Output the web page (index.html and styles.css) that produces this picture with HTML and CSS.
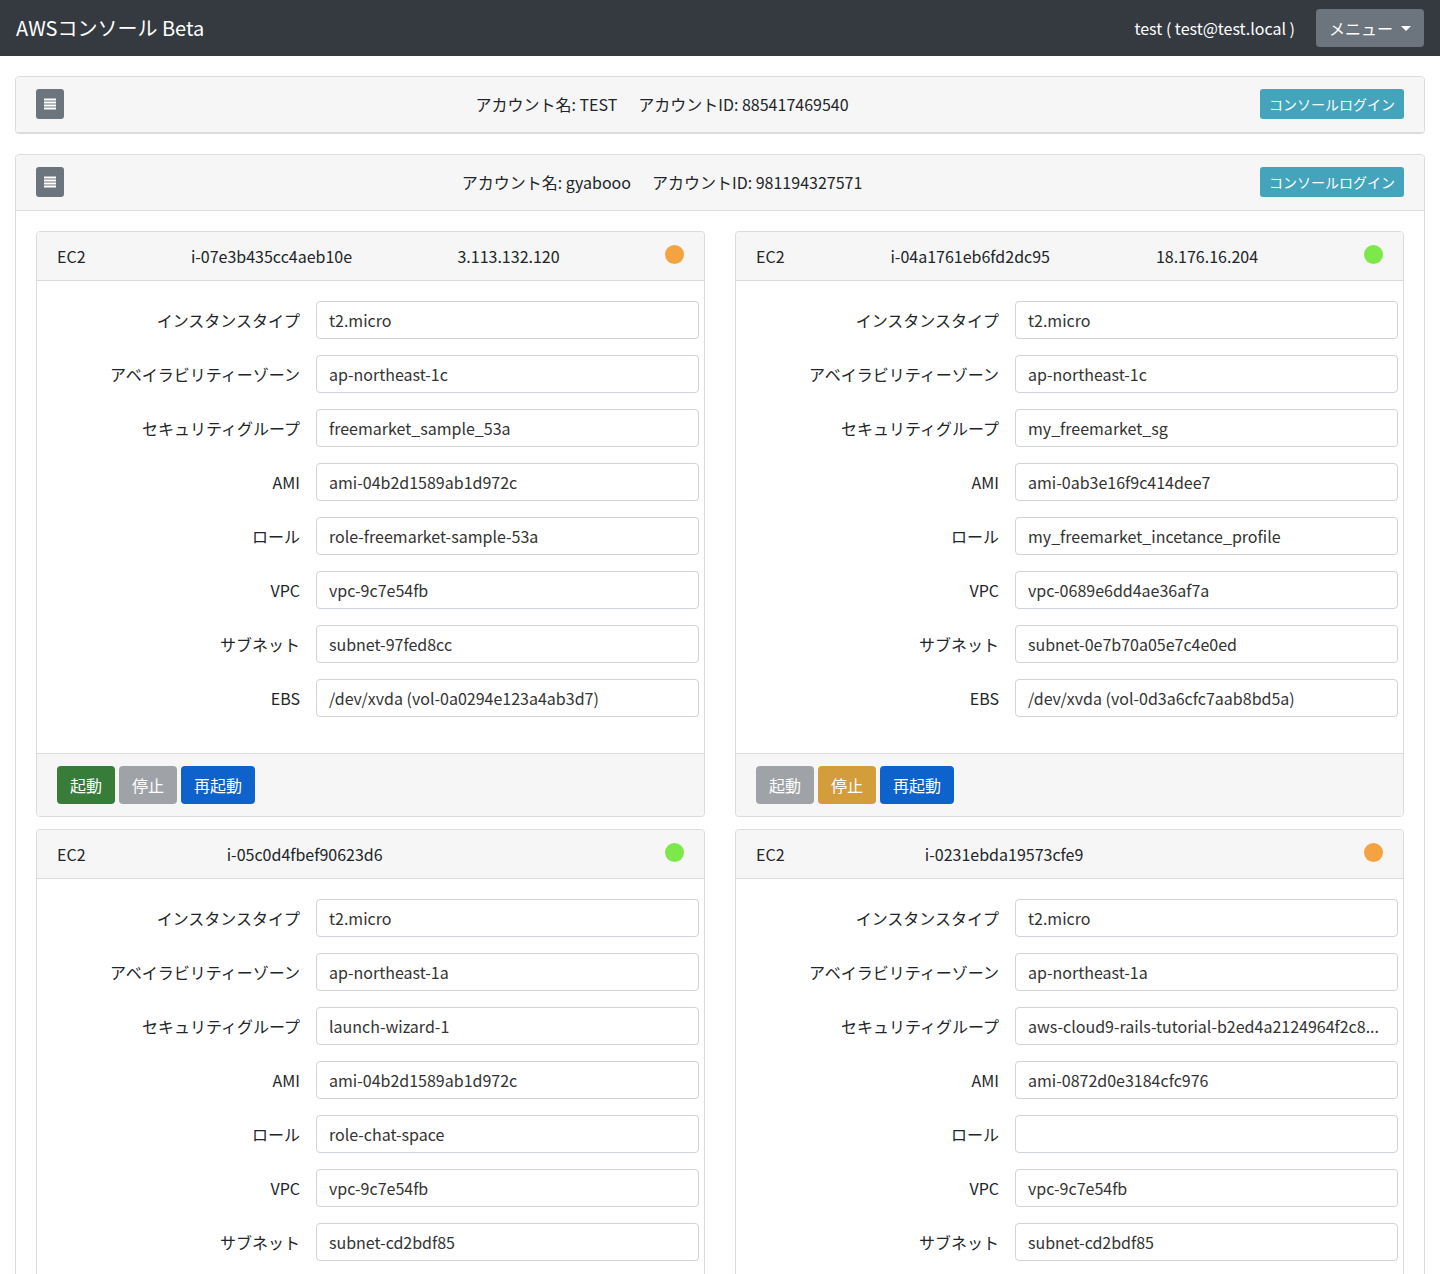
FILE: index.html
```html
<!DOCTYPE html>
<html lang="ja">
<head>
<meta charset="utf-8">
<title>AWSコンソール Beta</title>
<link rel="stylesheet" href="styles.css">
</head>
<body>
<nav class="navbar">
  <div class="brand">AWSコンソール Beta</div>
  <div class="nav-right">
    <span class="user">test ( test@test.local )</span>
    <button class="menu-btn">メニュー<span class="caret"></span></button>
  </div>
</nav>

<main class="container">
  <section class="account">
    <div class="account-header">
      <button class="list-btn"><svg width="12" height="12" viewBox="0 0 12 12"><rect x="0" y="0.5" width="12" height="2" fill="#fff"/><rect x="0" y="3.5" width="12" height="2" fill="#fff"/><rect x="0" y="6.5" width="12" height="2" fill="#fff"/><rect x="0" y="9.5" width="12" height="2" fill="#fff"/></svg></button>
      <div class="account-info"><span>アカウント名: TEST</span><span>アカウントID: 885417469540</span></div>
      <button class="login-btn">コンソールログイン</button>
    </div>
  </section>

  <section class="account">
    <div class="account-header">
      <button class="list-btn"><svg width="12" height="12" viewBox="0 0 12 12"><rect x="0" y="0.5" width="12" height="2" fill="#fff"/><rect x="0" y="3.5" width="12" height="2" fill="#fff"/><rect x="0" y="6.5" width="12" height="2" fill="#fff"/><rect x="0" y="9.5" width="12" height="2" fill="#fff"/></svg></button>
      <div class="account-info"><span>アカウント名: gyabooo</span><span>アカウントID: 981194327571</span></div>
      <button class="login-btn">コンソールログイン</button>
    </div>
    <div class="account-body">
      <div class="instances">

        <div class="ec2">
          <div class="ec2-header"><span>EC2</span><span>i-07e3b435cc4aeb10e</span><span>3.113.132.120</span><span class="dot orange"></span></div>
          <div class="ec2-body">
            <div class="field"><label>インスタンスタイプ</label><div class="value">t2.micro</div></div>
            <div class="field"><label>アベイラビリティーゾーン</label><div class="value">ap-northeast-1c</div></div>
            <div class="field"><label>セキュリティグループ</label><div class="value">freemarket_sample_53a</div></div>
            <div class="field"><label>AMI</label><div class="value">ami-04b2d1589ab1d972c</div></div>
            <div class="field"><label>ロール</label><div class="value">role-freemarket-sample-53a</div></div>
            <div class="field"><label>VPC</label><div class="value">vpc-9c7e54fb</div></div>
            <div class="field"><label>サブネット</label><div class="value">subnet-97fed8cc</div></div>
            <div class="field"><label>EBS</label><div class="value">/dev/xvda (vol-0a0294e123a4ab3d7)</div></div>
          </div>
          <div class="ec2-footer">
            <button class="btn green">起動</button>
            <button class="btn gray">停止</button>
            <button class="btn blue">再起動</button>
          </div>
        </div>

        <div class="ec2">
          <div class="ec2-header"><span>EC2</span><span>i-04a1761eb6fd2dc95</span><span>18.176.16.204</span><span class="dot green"></span></div>
          <div class="ec2-body">
            <div class="field"><label>インスタンスタイプ</label><div class="value">t2.micro</div></div>
            <div class="field"><label>アベイラビリティーゾーン</label><div class="value">ap-northeast-1c</div></div>
            <div class="field"><label>セキュリティグループ</label><div class="value">my_freemarket_sg</div></div>
            <div class="field"><label>AMI</label><div class="value">ami-0ab3e16f9c414dee7</div></div>
            <div class="field"><label>ロール</label><div class="value">my_freemarket_incetance_profile</div></div>
            <div class="field"><label>VPC</label><div class="value">vpc-0689e6dd4ae36af7a</div></div>
            <div class="field"><label>サブネット</label><div class="value">subnet-0e7b70a05e7c4e0ed</div></div>
            <div class="field"><label>EBS</label><div class="value">/dev/xvda (vol-0d3a6cfc7aab8bd5a)</div></div>
          </div>
          <div class="ec2-footer">
            <button class="btn gray">起動</button>
            <button class="btn orange">停止</button>
            <button class="btn blue">再起動</button>
          </div>
        </div>

        <div class="ec2">
          <div class="ec2-header"><span>EC2</span><span>i-05c0d4fbef90623d6</span><span></span><span class="dot green"></span></div>
          <div class="ec2-body">
            <div class="field"><label>インスタンスタイプ</label><div class="value">t2.micro</div></div>
            <div class="field"><label>アベイラビリティーゾーン</label><div class="value">ap-northeast-1a</div></div>
            <div class="field"><label>セキュリティグループ</label><div class="value">launch-wizard-1</div></div>
            <div class="field"><label>AMI</label><div class="value">ami-04b2d1589ab1d972c</div></div>
            <div class="field"><label>ロール</label><div class="value">role-chat-space</div></div>
            <div class="field"><label>VPC</label><div class="value">vpc-9c7e54fb</div></div>
            <div class="field"><label>サブネット</label><div class="value">subnet-cd2bdf85</div></div>
            <div class="field"><label>EBS</label><div class="value">/dev/xvda</div></div>
          </div>
          <div class="ec2-footer">
            <button class="btn gray">起動</button>
            <button class="btn orange">停止</button>
            <button class="btn blue">再起動</button>
          </div>
        </div>

        <div class="ec2">
          <div class="ec2-header"><span>EC2</span><span>i-0231ebda19573cfe9</span><span></span><span class="dot orange"></span></div>
          <div class="ec2-body">
            <div class="field"><label>インスタンスタイプ</label><div class="value">t2.micro</div></div>
            <div class="field"><label>アベイラビリティーゾーン</label><div class="value">ap-northeast-1a</div></div>
            <div class="field"><label>セキュリティグループ</label><div class="value">aws-cloud9-rails-tutorial-b2ed4a2124964f2c8...</div></div>
            <div class="field"><label>AMI</label><div class="value">ami-0872d0e3184cfc976</div></div>
            <div class="field"><label>ロール</label><div class="value"></div></div>
            <div class="field"><label>VPC</label><div class="value">vpc-9c7e54fb</div></div>
            <div class="field"><label>サブネット</label><div class="value">subnet-cd2bdf85</div></div>
            <div class="field"><label>EBS</label><div class="value">/dev/xvda</div></div>
          </div>
          <div class="ec2-footer">
            <button class="btn green">起動</button>
            <button class="btn gray">停止</button>
            <button class="btn blue">再起動</button>
          </div>
        </div>

      </div>
    </div>
  </section>
</main>
</body>
</html>
```

FILE: styles.css
```css
* { box-sizing: border-box; }
body {
  margin: 0;
  font-family: "Noto Sans CJK JP", "Noto Sans", sans-serif;
  font-size: 16px;
  line-height: 24px;
  color: #212529;
  background: #fff;
}
button { font-family: inherit; cursor: pointer; }

.navbar {
  height: 56px;
  background: #343a40;
  display: flex;
  align-items: center;
  justify-content: space-between;
  padding: 0 16px;
  color: #fff;
}
.brand { font-size: 20px; line-height: 30px; }
.nav-right { display: flex; align-items: center; gap: 21px; }
.user { font-size: 16px; }
.menu-btn {
  height: 38px;
  background: #6c757d;
  color: #fff;
  border: none;
  border-radius: 4px;
  font-size: 16px;
  padding: 0 13px;
  display: flex;
  align-items: center;
}
.caret {
  display: inline-block;
  margin-left: 8px;
  border-top: 5px solid #fff;
  border-left: 5px solid transparent;
  border-right: 5px solid transparent;
}

.container { padding: 20px 15px 0 15px; }

.account {
  border: 1px solid #dcdcdc;
  border-radius: 4px;
  margin-bottom: 20px;
  background: #fff;
}
.account-header {
  background: #f6f6f6;
  border-bottom: 1px solid #dcdcdc;
  padding: 12px 20px 13px;
  display: flex;
  align-items: center;
  border-radius: 4px 4px 0 0;
}
.list-btn {
  width: 28px;
  height: 30px;
  border: none;
  border-radius: 3px;
  background: #6c757d;
  padding: 0;
  display: flex;
  align-items: center;
  justify-content: center;
}
.account-info {
  flex: 1;
  display: flex;
  justify-content: center;
  gap: 21px;
}
.login-btn {
  height: 30px;
  background: #44a4bc;
  color: #fff;
  border: none;
  border-radius: 3px;
  font-size: 14px;
  padding: 0 9px;
}

.account-body { padding: 20px; }
.instances {
  display: grid;
  grid-template-columns: 1fr 1fr;
  column-gap: 30px;
  row-gap: 12px;
}
.ec2 {
  border: 1px solid #dcdcdc;
  border-radius: 4px;
}
.ec2-header {
  background: #f6f6f6;
  border-bottom: 1px solid #dcdcdc;
  padding: 12px 20px;
  display: flex;
  justify-content: space-between;
  align-items: center;
  border-radius: 4px 4px 0 0;
}
.dot {
  width: 19px;
  height: 19px;
  border-radius: 50%;
  margin-top: -4px;
}
.dot.orange { background: #f4a340; }
.dot.green { background: #7ce84a; }

.ec2-body { padding: 20px 5px 20px 20px; }
.field {
  display: grid;
  grid-template-columns: 243px 1fr;
  column-gap: 16px;
  align-items: center;
  margin-bottom: 16px;
}
.field label { text-align: right; }
.value {
  height: 38px;
  border: 1px solid #ced4da;
  border-radius: 4px;
  padding: 6px 12px;
  color: #333;
  white-space: nowrap;
  overflow: hidden;
  text-overflow: ellipsis;
}

.ec2-footer {
  background: #f6f6f6;
  border-top: 1px solid #dcdcdc;
  padding: 12px 20px;
  display: flex;
  gap: 4px;
  border-radius: 0 0 4px 4px;
}
.btn {
  height: 38px;
  border: 1px solid transparent;
  border-radius: 4px;
  color: #fff;
  font-size: 16px;
  padding: 0 12px;
}
.btn.green { background: #377c39; }
.btn.gray { background: #9fa3a8; }
.btn.blue { background: #0e62cc; }
.btn.orange { background: #d49d3b; }
```
